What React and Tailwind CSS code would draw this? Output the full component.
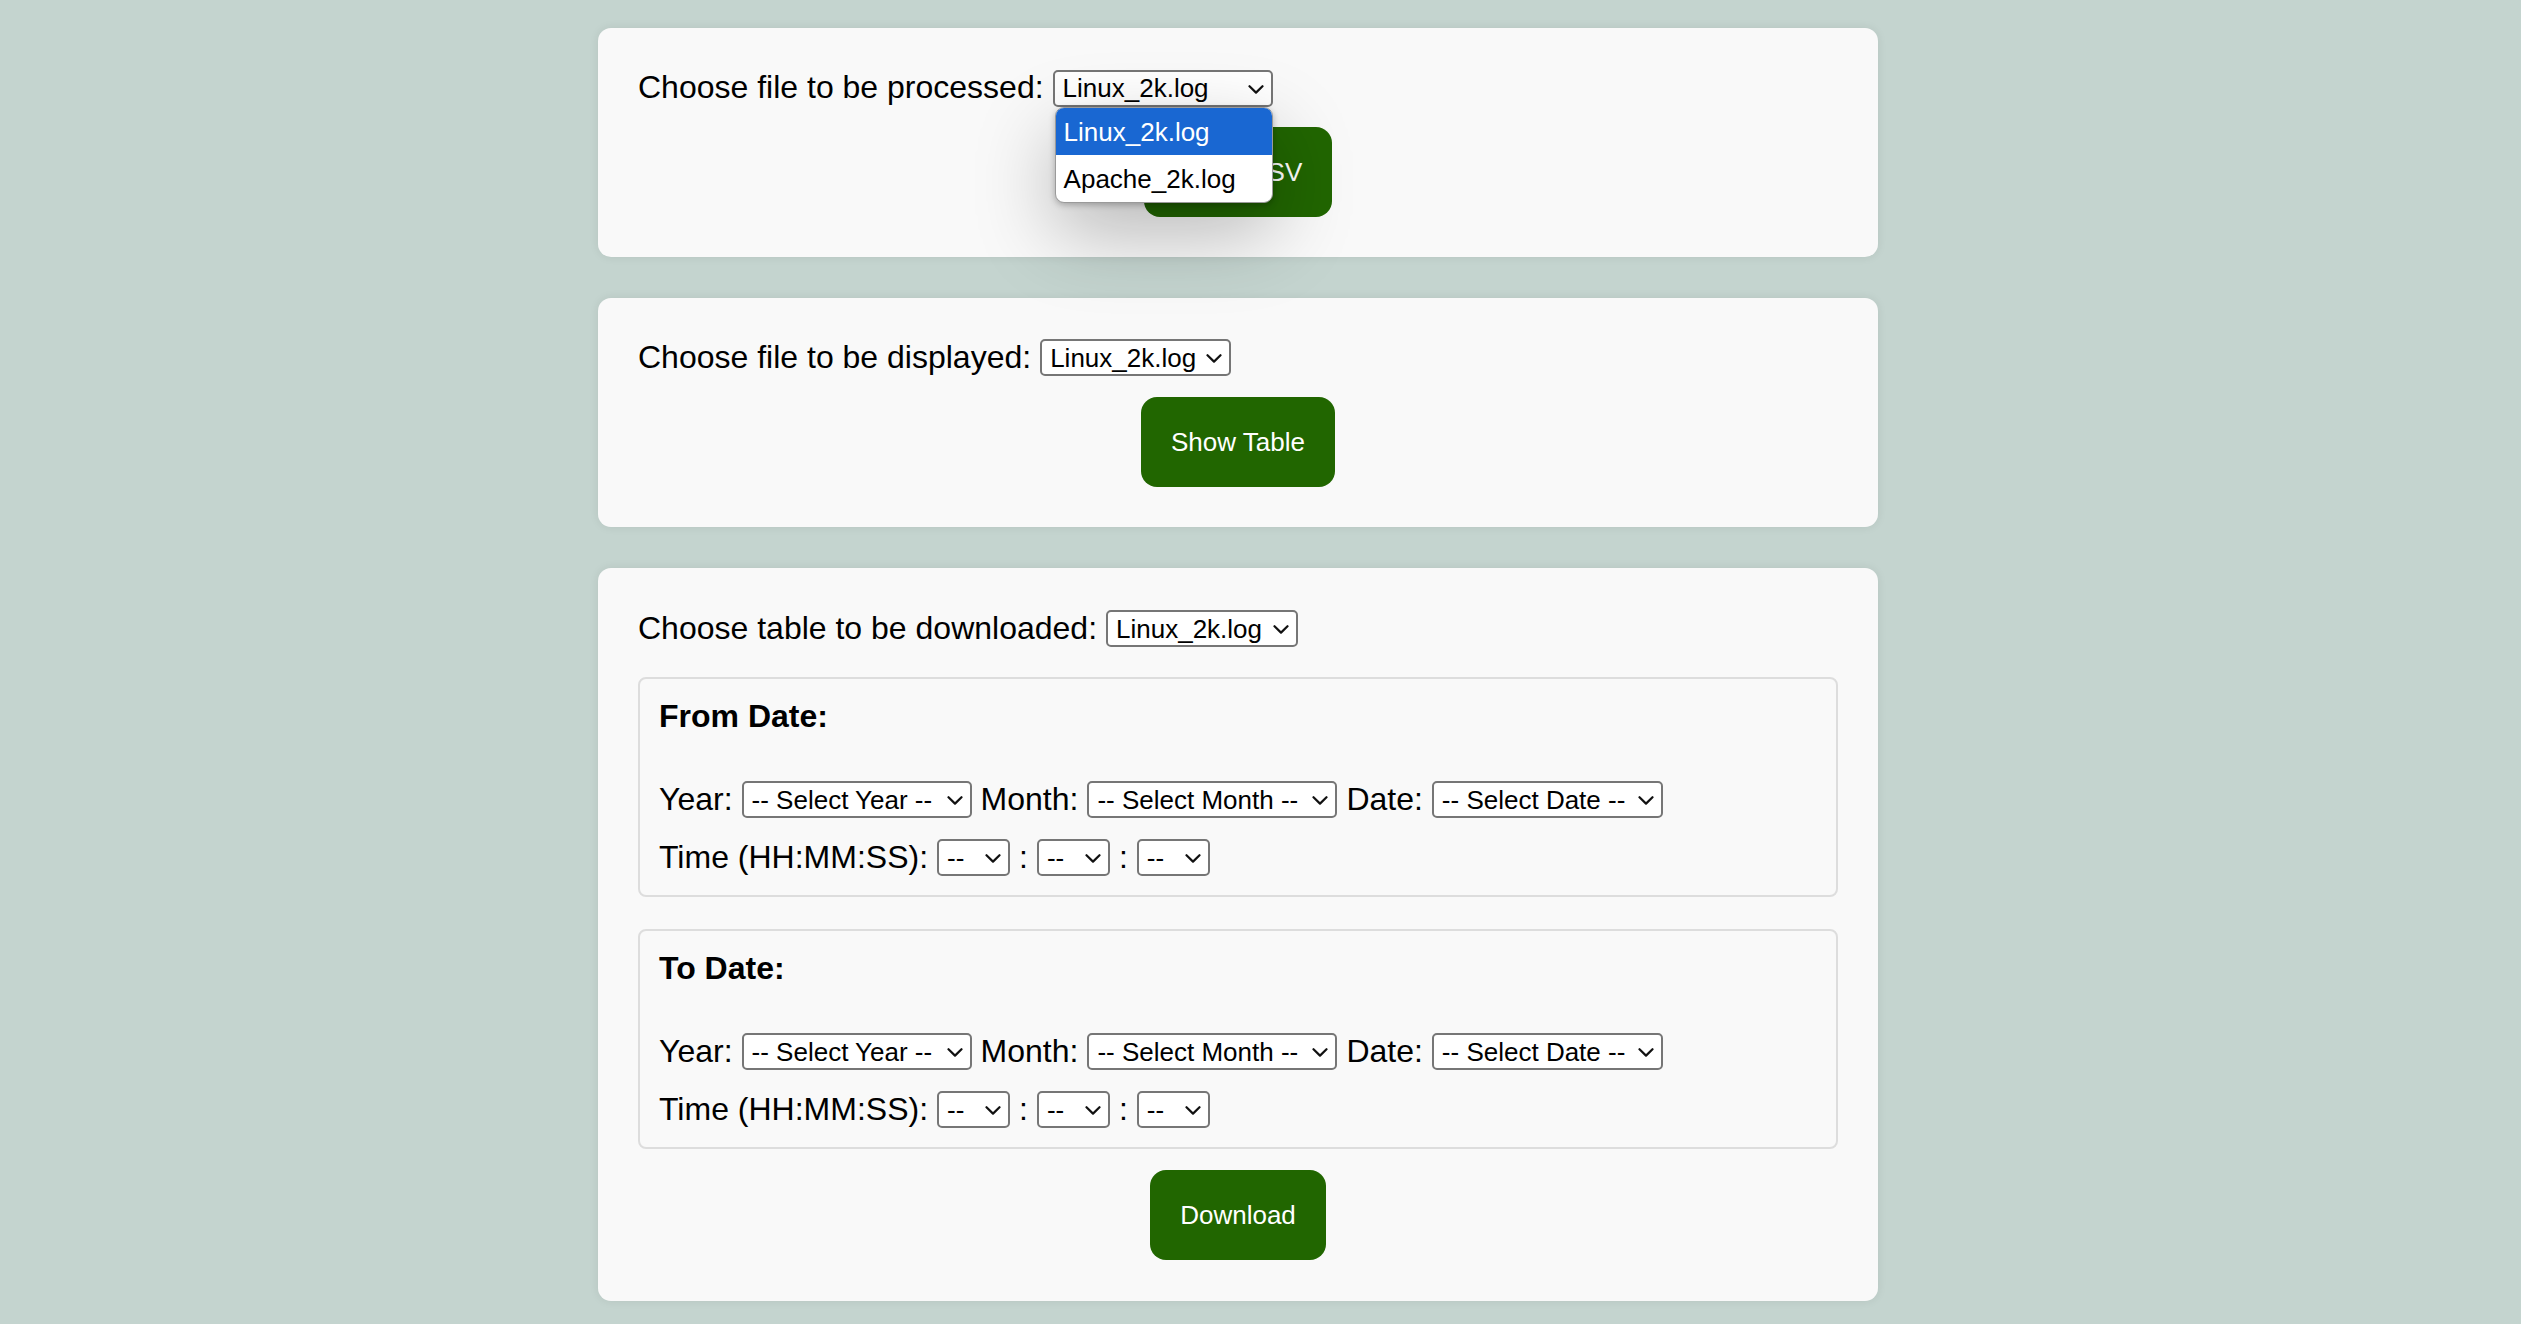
import React from "react";

function Chevron() {
  return (
    <svg width="16" height="9" viewBox="0 0 16 9" className="mt-[2px] shrink-0" fill="none">
      <path d="M1.5 1.2 L8 7.6 L14.5 1.2" stroke="#111" strokeWidth="2.2" strokeLinecap="round" strokeLinejoin="round" />
    </svg>
  );
}

function Sel({ w, text }) {
  return (
    <span
      className={`inline-flex h-[37px] items-center justify-between rounded-[5px] border-2 border-[#767676] bg-white pl-[8px] pr-[7px] text-[26px] leading-none text-black ${w}`}
    >
      <span className="whitespace-pre">{text}</span>
      <Chevron />
    </span>
  );
}

function Btn({ children }) {
  return (
    <div className="flex justify-center">
      <button className="rounded-[16px] bg-[#216600] px-[30px] py-[30px] text-[26px] leading-[30px] text-white">
        {children}
      </button>
    </div>
  );
}

function DateBox({ title, className }) {
  return (
    <div className={`rounded-[8px] border-2 border-[#dddddd] px-[19px] pt-[19px] pb-[19px] ${className}`}>
      <div className="text-[32px] font-bold leading-[37px]">{title}</div>
      <div className="mt-[46px] flex h-[37px] items-center gap-[9px] text-[32px] leading-[37px]">
        <span>Year:</span>
        <Sel w="w-[230px]" text="-- Select Year --" />
        <span>Month:</span>
        <Sel w="w-[250px]" text="-- Select Month --" />
        <span>Date:</span>
        <Sel w="w-[231px]" text="-- Select Date --" />
      </div>
      <div className="mt-[21px] flex h-[37px] items-center gap-[9px] text-[32px] leading-[37px]">
        <span>Time (HH:MM:SS):</span>
        <Sel w="w-[73px]" text="--" />
        <span>:</span>
        <Sel w="w-[73px]" text="--" />
        <span>:</span>
        <Sel w="w-[73px]" text="--" />
      </div>
    </div>
  );
}

export default function App() {
  return (
    <div className="min-h-[1324px] w-full bg-[#c4d4cf] font-['Liberation_Sans',Arial,sans-serif] text-black">
      <div className="flex w-[2476px] flex-col items-center gap-[41px] pt-[28px] pb-[23px]">
        {/* Card 1 */}
        <div className="relative z-10 w-[1280px] rounded-[13px] bg-[#f9f9f9] px-[40px] pt-[41px] pb-[40px] shadow-[0_0_10px_rgba(0,0,0,0.08)]">
          <div className="flex h-[37px] items-center gap-[9px] text-[32px] leading-[37px]">
            <span>Choose file to be processed:</span>
            <div className="relative z-10">
              <Sel w="w-[220px]" text="Linux_2k.log" />
              <div className="absolute left-[2px] top-[39px] w-[218px] overflow-hidden rounded-[9px] border border-[#9a9a9a] bg-white text-[26px] leading-[30px] shadow-[0_2px_6px_rgba(0,0,0,0.25),0_28px_80px_rgba(0,0,0,0.28)]">
                <div className="flex h-[47px] items-center bg-[#1967d2] px-[8px] text-white">Linux_2k.log</div>
                <div className="flex h-[47px] items-center px-[8px] text-black">Apache_2k.log</div>
              </div>
            </div>
          </div>
          <div className="mt-[21px]">
            <Btn>Parse CSV</Btn>
          </div>
        </div>

        {/* Card 2 */}
        <div className="w-[1280px] rounded-[13px] bg-[#f9f9f9] px-[40px] pt-[41px] pb-[40px] shadow-[0_0_10px_rgba(0,0,0,0.08)]">
          <div className="flex h-[37px] items-center gap-[9px] text-[32px] leading-[37px]">
            <span>Choose file to be displayed:</span>
            <Sel w="w-[191px]" text="Linux_2k.log" />
          </div>
          <div className="mt-[21px]">
            <Btn>Show Table</Btn>
          </div>
        </div>

        {/* Card 3 */}
        <div className="w-[1280px] rounded-[13px] bg-[#f9f9f9] px-[40px] pt-[42px] pb-[41px] shadow-[0_0_10px_rgba(0,0,0,0.08)]">
          <div className="flex h-[37px] items-center gap-[9px] text-[32px] leading-[37px]">
            <span>Choose table to be downloaded:</span>
            <Sel w="w-[192px]" text="Linux_2k.log" />
          </div>
          <DateBox title="From Date:" className="mt-[30px]" />
          <DateBox title="To Date:" className="mt-[32px]" />
          <div className="mt-[21px]">
            <Btn>Download</Btn>
          </div>
        </div>
      </div>
    </div>
  );
}
